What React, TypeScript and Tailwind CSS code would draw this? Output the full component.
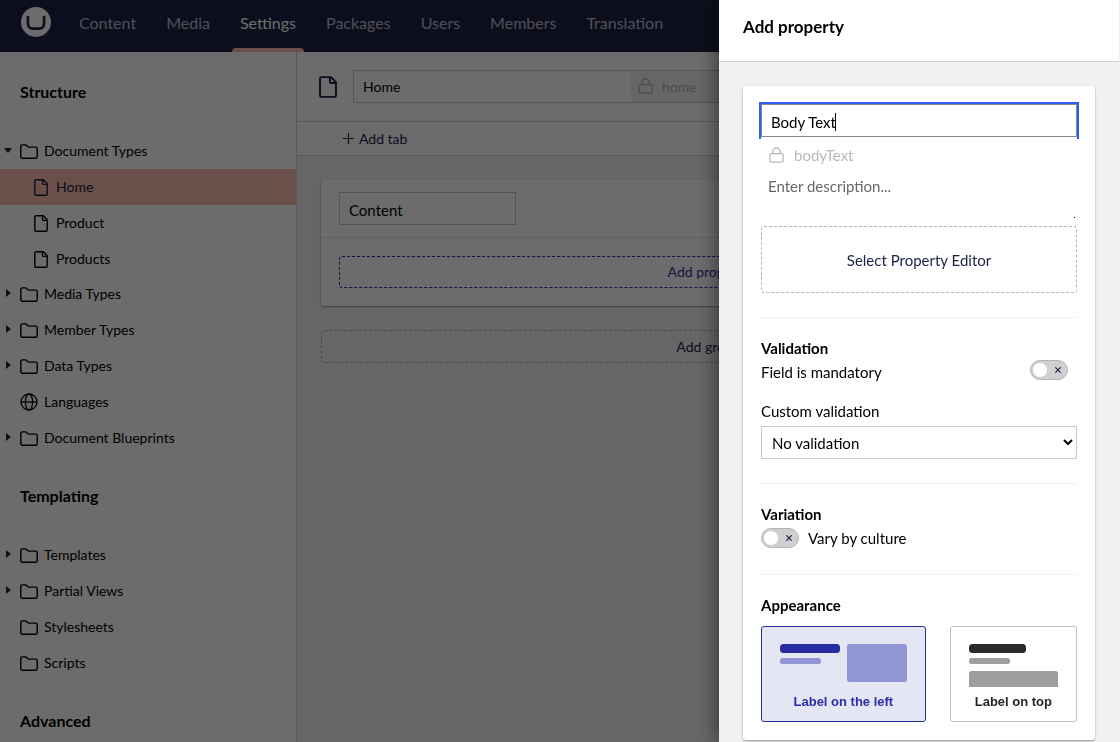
import React, { useState } from "react";

function UmbracoLogo() {
  return (
    <svg viewBox="0 0 30 30" className="h-[30px] w-[30px]" aria-hidden="true">
      <circle cx="15" cy="15" r="15" fill="#fff" />
      <path
        d="M7 8.800c-.2 2.600-.2 5-.1 7.200.2 4.300 1.600 5.600 5.100 5.600h6c3.500 0 4.900-1.300 5.100-5.600.1-2.200.1-4.600-.1-7.200"
        fill="none"
        stroke="#1e2345"
        strokeWidth="2.600"
      />
    </svg>
  );
}

function DocumentIcon({ className, strokeWidth = 1.4 }: { className: string; strokeWidth?: number }) {
  return (
    <svg
      viewBox="0 0 14 17"
      className={className}
      fill="none"
      stroke="currentColor"
      strokeWidth={strokeWidth}
      strokeLinejoin="round"
      aria-hidden="true"
    >
      <path d="M9.300.8H2A1.200 1.200 0 0 0 .8 2v13A1.200 1.200 0 0 0 2 16.200h10a1.200 1.200 0 0 0 1.200-1.200V4.800z" />
      <path d="M8.500.9v3.300a1.200 1.200 0 0 0 1.200 1.200h3.400" />
    </svg>
  );
}

function FolderIcon() {
  return (
    <svg
      viewBox="0 0 18 15"
      className="h-[15px] w-[18px]"
      fill="none"
      stroke="currentColor"
      strokeWidth="1.400"
      strokeLinejoin="round"
      aria-hidden="true"
    >
      <path d="M.8 2.300C.8 1.400 1.400.9 2.200.9h3.200c.6 0 1 .2 1.300.6l.9 1.100c.3.300.6.500 1 .5h7.200c.8 0 1.400.6 1.400 1.400v8.300c0 .8-.6 1.400-1.400 1.400H2.200c-.8 0-1.400-.6-1.400-1.400z" />
    </svg>
  );
}

function GlobeIcon() {
  return (
    <svg
      viewBox="0 0 18 18"
      className="h-[18px] w-[18px]"
      fill="none"
      stroke="currentColor"
      strokeWidth="1.300"
      aria-hidden="true"
    >
      <circle cx="9" cy="9" r="8" />
      <ellipse cx="9" cy="9" rx="3.600" ry="8" />
      <path d="M1 9h16" />
    </svg>
  );
}

function LockIcon({ className }: { className: string }) {
  return (
    <svg
      viewBox="0 0 16 18"
      className={className}
      fill="none"
      stroke="currentColor"
      strokeWidth="1.400"
      aria-hidden="true"
    >
      <rect x="1" y="7" width="14" height="9" rx="1.500" />
      <path d="M4 7V5a4 4 0 0 1 8 0v2" />
    </svg>
  );
}

type TreeNode = {
  label: string;
  icon: "folder" | "document" | "globe";
  state?: "open" | "closed";
  active?: boolean;
  children?: TreeNode[];
};

const sections: { title: string; items: TreeNode[] }[] = [
  {
    title: "Structure",
    items: [
      {
        label: "Document Types",
        icon: "folder",
        state: "open",
        children: [
          { label: "Home", icon: "document", active: true },
          { label: "Product", icon: "document" },
          { label: "Products", icon: "document" },
        ],
      },
      { label: "Media Types", icon: "folder", state: "closed" },
      { label: "Member Types", icon: "folder", state: "closed" },
      { label: "Data Types", icon: "folder", state: "closed" },
      { label: "Languages", icon: "globe" },
      { label: "Document Blueprints", icon: "folder", state: "closed" },
    ],
  },
  {
    title: "Templating",
    items: [
      { label: "Templates", icon: "folder", state: "closed" },
      { label: "Partial Views", icon: "folder", state: "closed" },
      { label: "Stylesheets", icon: "folder" },
      { label: "Scripts", icon: "folder" },
    ],
  },
  { title: "Advanced", items: [] },
];

function TreeItem({ node }: { node: TreeNode }) {
  const nested = node.icon === "document";
  return (
    <li>
      <a
        href="#"
        className={
          node.active
            ? "flex h-9 items-center bg-[#fbbab0] text-[#1e2345]"
            : "flex h-9 items-center text-black"
        }
      >
        <span className={nested ? "w-[34px] shrink-0" : "flex w-5 shrink-0 pb-[2px] pl-1 text-[#1e2345]"}>
          {node.state === "open" && (
            <svg viewBox="0 0 8 5" className="h-[5px] w-2" fill="currentColor" aria-hidden="true">
              <path d="M0 0h8L4 5z" />
            </svg>
          )}
          {node.state === "closed" && (
            <svg viewBox="0 0 8 8" className="h-2 w-2" fill="currentColor" aria-hidden="true">
              <path d="M2 0v8l5-4z" />
            </svg>
          )}
        </span>
        <span className={nested ? "w-[22px] shrink-0" : "w-6 shrink-0"}>
          {node.icon === "folder" && <FolderIcon />}
          {node.icon === "document" && <DocumentIcon className="h-[17px] w-[14px]" />}
          {node.icon === "globe" && <GlobeIcon />}
        </span>
        {node.label}
      </a>
      {node.children && (
        <ul className="-mb-px">
          {node.children.map((child) => (
            <TreeItem key={child.label} node={child} />
          ))}
        </ul>
      )}
    </li>
  );
}

const navItems = ["Content", "Media", "Settings", "Packages", "Users", "Members", "Translation"];

function Toggle({ id, label }: { id: string; label?: string }) {
  const [on, setOn] = useState(false);
  return (
    <span className="relative flex h-5 w-[38px] shrink-0">
      <input
        id={id}
        type="checkbox"
        checked={on}
        onChange={(e) => setOn(e.target.checked)}
        aria-label={label}
        className="h-5 w-[38px] appearance-none rounded-full border border-[#b5b5b7] bg-[#d0d0d2] checked:bg-[#2bc37c]"
      />
      <span
        className={
          on
            ? "pointer-events-none absolute top-[3px] right-[3px] h-[14px] w-[14px] rounded-full bg-white"
            : "pointer-events-none absolute top-[3px] left-[3px] h-[14px] w-[14px] rounded-full bg-white"
        }
      />
      {!on && (
        <svg
          viewBox="0 0 6 6"
          className="pointer-events-none absolute top-[7px] right-[7px] h-[6px] w-[6px]"
          stroke="#1e2345"
          strokeWidth="1.200"
          aria-hidden="true"
        >
          <path d="M.3.3l5.400 5.400M5.700.3L.3 5.700" />
        </svg>
      )}
    </span>
  );
}

function Backoffice() {
  return (
    <div className="flex h-screen flex-col overflow-hidden bg-white">
      <header className="flex h-13 shrink-0 items-stretch bg-[#1e2345] pl-[21px]">
        <a href="#" aria-label="Start" className="pt-[7px]">
          <UmbracoLogo />
        </a>
        <nav className="ml-5 flex gap-[14px] text-base">
          {navItems.map((item) => (
            <a
              key={item}
              href="#"
              className={
                item === "Settings"
                  ? "flex flex-col justify-between text-white"
                  : "flex flex-col justify-between text-[#babbc6]"
              }
            >
              <span className="flex h-[46px] items-center px-2">{item}</span>
              {item === "Settings" && <span className="h-1 rounded-t-sm bg-[#fbbab0]" />}
            </a>
          ))}
        </nav>
      </header>

      <div className="flex min-h-0 flex-1">
        <aside className="w-[297px] shrink-0 overflow-hidden border-r border-[#d0d0d4]">
          {sections.map((section) => (
            <section key={section.title}>
              <h2 className="flex h-20 items-center pl-5 text-base font-bold text-black">
                {section.title}
              </h2>
              <ul className="pt-px text-sm">
                {section.items.map((node) => (
                  <TreeItem key={node.label} node={node} />
                ))}
              </ul>
            </section>
          ))}
        </aside>

        <main className="flex min-w-0 flex-1 flex-col bg-[#f0f0f2]">
          <div className="flex h-[70px] shrink-0 items-center border-b border-[#d0d0d4] bg-white px-[22px]">
            <DocumentIcon className="h-[22px] w-[18px] text-[#1e2345]" strokeWidth={1.5} />
            <div className="ml-4 flex h-[33px] flex-1 border border-[#c8c8cc]">
              <input
                aria-label="Name"
                defaultValue="Home"
                className="w-[277px] px-[9px] text-sm text-black outline-none"
              />
              <div className="flex flex-1 items-center bg-[#f0f0f2] pl-[7px] text-sm text-[#b5b5b9]">
                <LockIcon className="mr-[9px] h-[17px] w-[15px]" />
                home
              </div>
            </div>
          </div>
          <div className="flex h-[34px] shrink-0 items-center border-b border-[#d0d0d4] bg-white pl-[46px]">
            <button type="button" className="flex items-center gap-[5px] text-sm text-[#1e2345]">
              <svg viewBox="0 0 11 11" className="h-[11px] w-[11px]" stroke="currentColor" strokeWidth="1.200" aria-hidden="true">
                <path d="M5.500 0v11M0 5.500h11" />
              </svg>
              Add tab
            </button>
          </div>
          <div className="flex flex-col gap-6 p-6">
            <section className="rounded-[3px] bg-white shadow-[0_1px_2px_rgba(0,0,0,0.4)]">
              <div className="border-b border-[#e4e4e8] px-[18px] py-3">
                <input
                  aria-label="Group name"
                  defaultValue="Content"
                  className="block h-[33px] w-[177px] border border-[#c8c8cc] px-[9px] pt-[2px] text-[15px] text-black"
                />
              </div>
              <div className="p-[18px]">
                <button
                  type="button"
                  className="h-8 w-full rounded-[3px] border border-dashed border-[#2e2fa5] text-sm text-[#2e2fa5]"
                >
                  Add property
                </button>
              </div>
            </section>
            <button
              type="button"
              className="h-[33px] w-full rounded-[3px] border border-dashed border-[#b4b4b8] text-sm text-[#1e2345]"
            >
              Add group
            </button>
          </div>
        </main>
      </div>
    </div>
  );
}

function PropertyDrawer() {
  return (
    <aside
      role="dialog"
      aria-labelledby="drawer-title"
      className="fixed inset-y-0 right-0 flex w-[401px] flex-col overflow-hidden bg-[#f0f0f2] pr-px text-[15px] text-black shadow-[0_0_20px_rgba(0,0,0,0.6)]"
    >
      <header className="h-[62px] shrink-0 border-b border-[#d0d0d4] bg-white px-6 pt-[15px]">
        <h1 id="drawer-title" className="text-[17px] leading-6 font-bold">
          Add property
        </h1>
      </header>
      <div className="p-6">
        <form className="rounded-[3px] bg-white p-[18px] shadow-[0_1px_2px_rgba(0,0,0,0.4)]">
          <div className="relative">
            <input
              aria-label="Property name"
              defaultValue="Body Text"
              className="block h-[33px] w-full border border-[#8a8a8c] px-[9px] pt-[2px] shadow-[0_0_0_2px_#2f5cf5] outline-none"
            />
            <span className="absolute top-[9px] left-[74px] h-[18px] w-px bg-black" />
          </div>
          <div className="relative bg-white">
            <div className="flex h-[37px] items-center pl-2 text-[#b9b9bb]">
              <LockIcon className="mr-[10px] h-[17px] w-[15px]" />
              bodyText
            </div>
            <textarea
              aria-label="Description"
              placeholder="Enter description..."
              className="block h-[44px] w-full resize-none px-[7px] pt-[2px] leading-5 outline-none placeholder:text-[#68686a]"
            />
            <span className="absolute right-[2px] bottom-0 h-px w-px bg-black" />
          </div>
          <button
            type="button"
            className="mt-2 h-[67px] w-full rounded-[3px] border border-dashed border-[#b4b4b8] pt-[2px] text-[#1e2345]"
          >
            Select Property Editor
          </button>

          <section className="mt-6 border-t border-[#f0f0f2] pt-[18px]">
            <h2 className="leading-6 font-bold">Validation</h2>
            <div className="flex justify-between pr-[9px]">
              <label htmlFor="mandatory" className="leading-6">
                Field is mandatory
              </label>
              <Toggle id="mandatory" />
            </div>
            <label htmlFor="custom-validation" className="mt-[15px] block leading-6">
              Custom validation
            </label>
            <select
              id="custom-validation"
              className="mt-[3px] block h-[33px] w-full border border-[#c8c8cc] bg-white pl-[6px]"
            >
              <option>No validation</option>
              <option>Validate as an email address</option>
              <option>Validate as a number</option>
              <option>Validate as a URL</option>
            </select>
          </section>

          <section className="mt-6 border-t border-[#f0f0f2] pt-[18px]">
            <h2 className="leading-6 font-bold">Variation</h2>
            <div className="flex items-center gap-[9px]">
              <Toggle id="vary-culture" />
              <label htmlFor="vary-culture" className="leading-6">
                Vary by culture
              </label>
            </div>
          </section>

          <section className="mt-6 border-t border-[#f0f0f2] pt-[18px]">
            <h2 className="leading-6 font-bold">Appearance</h2>
            <div className="mt-[9px] flex gap-6 font-['Liberation_Sans',sans-serif] text-[13px] font-bold">
              <button
                type="button"
                aria-pressed="true"
                className="flex h-24 flex-[165] flex-col items-center rounded-[3px] border border-[#2a2da3] bg-[#e4e6f4] pt-4 text-[#2a2da3]"
              >
                <svg viewBox="0 0 127 44" className="h-11 w-[127px]" aria-hidden="true">
                  <rect x="0" y="1" width="60" height="9" rx="3.500" fill="#272ca3" />
                  <rect x="0" y="15" width="41" height="6" rx="2.500" fill="#9396d4" />
                  <rect x="67" y="1" width="60" height="38" rx="2.500" fill="#9396d4" />
                </svg>
                <span className="mt-[7px] leading-4">Label on the left</span>
              </button>
              <button
                type="button"
                aria-pressed="false"
                className="flex h-24 flex-[127] flex-col items-center rounded-[3px] border border-[#c0c0c2] bg-white pt-4 text-[#262628]"
              >
                <svg viewBox="0 0 89 44" className="h-11 w-[89px]" aria-hidden="true">
                  <rect x="0" y="1" width="57" height="9" rx="3.500" fill="#2a2a2b" />
                  <rect x="0" y="15" width="41" height="6" rx="2.500" fill="#9e9e9e" />
                  <path d="M0 44V30.500A2.500 2.500 0 0 1 2.500 28h84a2.500 2.500 0 0 1 2.500 2.500V44z" fill="#9e9e9e" />
                </svg>
                <span className="mt-[7px] leading-4">Label on top</span>
              </button>
            </div>
          </section>
        </form>
      </div>
    </aside>
  );
}

export default function App() {
  return (
    <div className="font-[Lato,sans-serif]">
      <Backoffice />
      <div className="fixed inset-0 bg-black/[0.575]" />
      <PropertyDrawer />
    </div>
  );
}
